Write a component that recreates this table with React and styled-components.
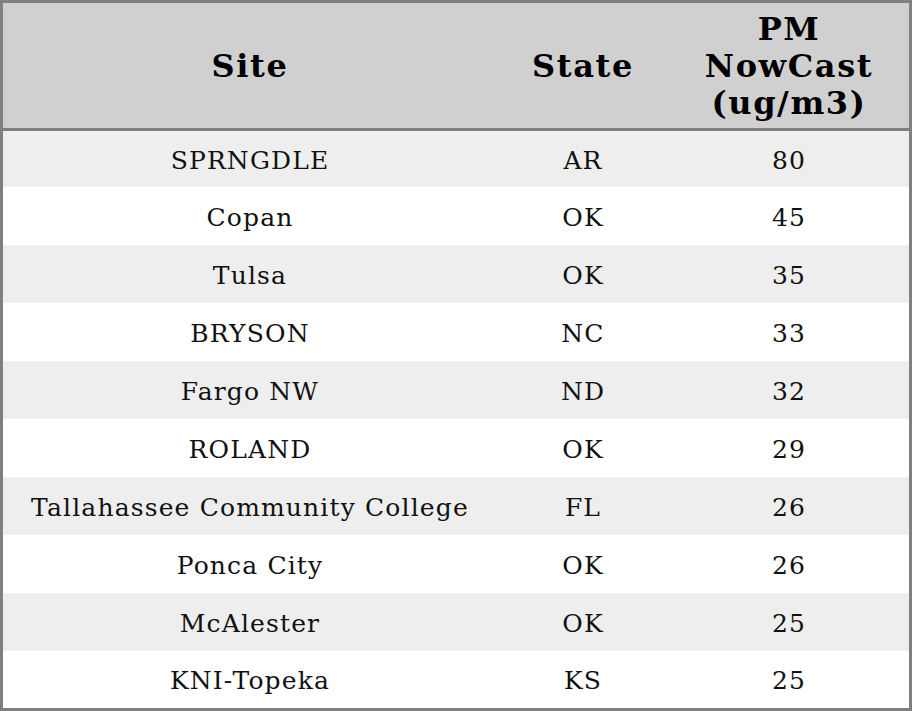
import React from "react";
import styled, { createGlobalStyle } from "styled-components";

const Global = createGlobalStyle`
  html, body { margin: 0; padding: 0; background: #ffffff; }
  body { font-family: "DejaVu Serif", "Liberation Serif", serif; }
`;

const Table = styled.div`
  width: 912px;
  height: 711px;
  box-sizing: border-box;
  border: 3px solid #808080;
  display: grid;
  grid-template-columns: 494px 172px 240px;
  grid-auto-rows: auto;
  background: #ffffff;
`;

const HeadCell = styled.div`
  height: 128px;
  box-sizing: border-box;
  background: #d0d0d0;
  border-bottom: 3px solid #808080;
  padding-top: 2px;
  display: flex;
  align-items: center;
  justify-content: center;
  text-align: center;
  font-weight: bold;
  font-size: 32px;
  line-height: 37px;
  letter-spacing: 1.6px;
  color: #000000;
`;

const Cell = styled.div`
  height: ${(p) => p.$h}px;
  box-sizing: border-box;
  background: ${(p) => (p.$alt ? "#eeeeee" : "#ffffff")};
  padding-top: 2px;
  display: flex;
  align-items: center;
  justify-content: center;
  font-size: 25px;
  letter-spacing: 1.15px;
  color: #111111;
  white-space: nowrap;
`;

const rows = [
  ["SPRNGDLE", "AR", "80"],
  ["Copan", "OK", "45"],
  ["Tulsa", "OK", "35"],
  ["BRYSON", "NC", "33"],
  ["Fargo NW", "ND", "32"],
  ["ROLAND", "OK", "29"],
  ["Tallahassee Community College", "FL", "26"],
  ["Ponca City", "OK", "26"],
  ["McAlester", "OK", "25"],
  ["KNI-Topeka", "KS", "25"],
];

export default function App() {
  return (
    <>
      <Global />
      <Table>
        <HeadCell>Site</HeadCell>
        <HeadCell>State</HeadCell>
        <HeadCell>
          PM
          <br />
          NowCast
          <br />
          (ug/m3)
        </HeadCell>
        {rows.map((r, i) => {
          const h = i === 0 ? 56 : i === rows.length - 1 ? 57 : 58;
          return r.map((v, j) => (
            <Cell key={`${i}-${j}`} $alt={i % 2 === 0} $h={h}>
              {v}
            </Cell>
          ));
        })}
      </Table>
    </>
  );
}
